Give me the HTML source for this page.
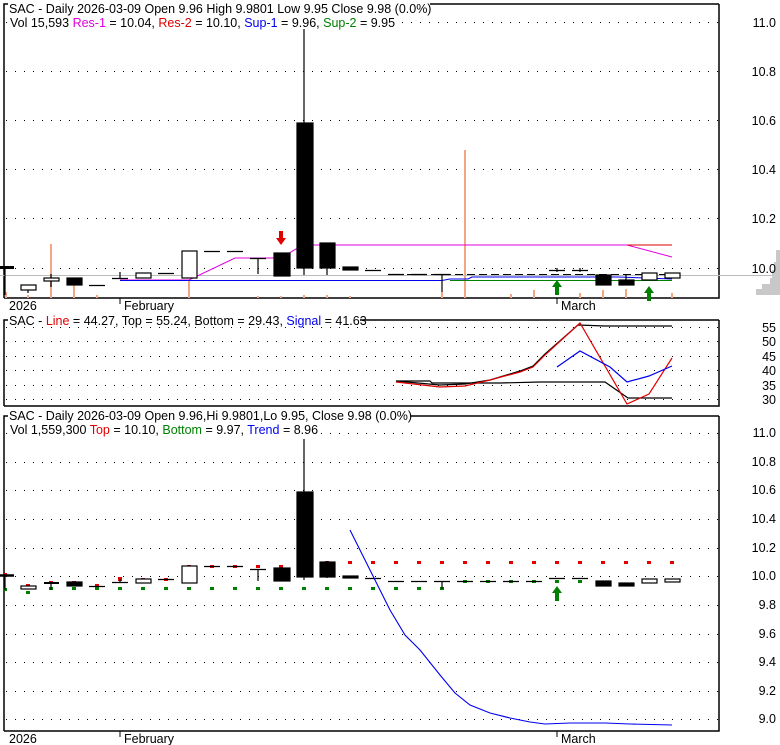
<!DOCTYPE html>
<html><head><style>
html,body{margin:0;padding:0;background:#fff;}
svg{display:block;font-family:"Liberation Sans",sans-serif;font-size:12.5px;}
</style></head><body>
<svg width="780" height="745" viewBox="0 0 780 745" xmlns="http://www.w3.org/2000/svg">
<g stroke="#000" stroke-width="1" stroke-dasharray="1 8" fill="none">
<path d="M6 22.5H719M6 71.5H719M6 120.5H719M6 169.5H719M6 218.5H719M6 268.5H719"/>
<path d="M6 327.5H719M6 341.5H719M6 356.5H719M6 370.5H719M6 385.5H719M6 399.5H719"/>
<path d="M6 433.5H719M6 462.5H719M6 490.5H719M6 519.5H719M6 548.5H719M6 576.5H719M6 605.5H719M6 634.5H719M6 662.5H719M6 691.5H719M6 719.5H719"/>
</g>
<!-- frames -->
<g stroke="#000" fill="none" stroke-width="1.5">
<path d="M4 298V4H8M719 4V298H4"/>
<path d="M430 4H719"/>
<path d="M4 406V320H8M719 320V406H4M360 320H719"/>
<path d="M4 731V416H8M719 416V731H4M410 416H719"/>
</g>
<!-- panel1 volume bars -->
<g stroke="#f4a582" stroke-width="2">
<path d="M6 298V292M28 298V295M51 298V244M74 298V285M97 298V295M189 298V281M258 298V296M281 298V296M304 298V295M327 298V295M350 298V296M442 298V292M465 298V150M511 298V294M534 298V290M580 298V293M603 298V290M626 298V289M649 298V293M672 298V293"/>
</g>
<!-- panel1 lines -->
<path d="M0 275.5H780" stroke="#bbb" stroke-width="1"/>
<path d="M776 250h4v45h-24v-6h6v-5h8v-6h2v-8h2v-8h2z" fill="#c8c8c8"/>
<path d="M395 274.5H672" stroke="#000" stroke-dasharray="8 4"/>
<path d="M120 280 L189 280 L235 258 L281 258 L296 249 L304 245 L627 245 L672 257" stroke="#e000e0" fill="none"/>
<path d="M627 245H672" stroke="#e00000"/>
<path d="M120 280.5H442 M442 280.5 L450 279 H468 L472 277 H603 L618 277 L672 279" stroke="#0000ee" fill="none"/>
<path d="M450 280.5H672" stroke="#008000"/>
<!-- panel1 candles -->
<g stroke="#000" stroke-width="1.2" fill="#fff">
<path d="M0 267.5H14" stroke-width="3"/><path d="M5 267V295"/>
<rect x="21" y="285" width="15" height="5"/><path d="M28 290V293"/>
<path d="M51 274V287"/><rect x="44" y="278" width="15" height="3"/>
<rect x="67" y="278" width="15" height="7" fill="#000"/>
<path d="M89 285.5H105M112 278.5H128M120 272V278M158 273.5H174M204 251.5H220M227 251.5H243M250 258.5H266M258 258V274M365 270.5H381M388 274.5H404M411 274.5H427M434 274.5H450M442 274V292M549 270.5H565M557 268V272M572 270.5H588M580 268V272"/>
<rect x="136" y="273" width="15" height="5"/>
<rect x="182" y="251" width="15" height="27"/>
<rect x="274" y="253" width="16" height="23" fill="#000"/>
<path d="M304 28V275M327 243V275"/>
<rect x="297" y="123" width="16" height="145" fill="#000"/>
<rect x="320" y="243" width="15" height="25" fill="#000"/>
<rect x="343" y="267" width="15" height="3" fill="#000"/>
<rect x="596" y="275" width="15" height="10" fill="#000"/>
<rect x="619" y="280" width="15" height="5" fill="#000"/><path d="M626 274V280"/>
<rect x="642" y="273" width="15" height="7"/>
<rect x="665" y="273" width="15" height="5"/>
</g>
<path d="M279 231h4v7h3l-5 7l-5-7h3z" fill="#e00000"/>
<path d="M555 295v-8h-3l5-7l5 7h-3v8z" fill="#008000"/>
<path d="M647 301v-8h-3l5-7l5 7h-3v8z" fill="#008000"/>
<!-- panel1 text -->
<rect x="8" y="16" width="380" height="13" fill="#fff"/>
<text x="9" y="13" fill="#000">SAC - Daily 2026-03-09 Open 9.96  High 9.9801  Low 9.95  Close 9.98 (0.0%)</text>
<text x="10" y="27"><tspan fill="#000">Vol 15,593 </tspan><tspan fill="#e000e0">Res-1</tspan><tspan fill="#000"> = 10.04, </tspan><tspan fill="#e00000">Res-2</tspan><tspan fill="#000"> = 10.10, </tspan><tspan fill="#0000ee">Sup-1</tspan><tspan fill="#000"> = 9.96, </tspan><tspan fill="#008000">Sup-2</tspan><tspan fill="#000"> = 9.95</tspan></text>
<g fill="#000" text-anchor="end">
<text x="776" y="27">11.0</text><text x="776" y="76">10.8</text><text x="776" y="125">10.6</text><text x="776" y="174">10.4</text><text x="776" y="223">10.2</text><text x="776" y="273">10.0</text>
</g>
<path d="M120 298v6M557 298v6M120 731v6M557 731v6" stroke="#000"/>
<text x="9" y="310">2026</text><text x="124" y="310">February</text><text x="561" y="310">March</text>
<!-- panel2 -->
<text x="9" y="325"><tspan>SAC - </tspan><tspan fill="#e00000">Line</tspan><tspan> = 44.27, Top = 55.24, Bottom = 29.43, </tspan><tspan fill="#0000ee">Signal</tspan><tspan> = 41.63</tspan></text>
<g fill="none" stroke-width="1.2">
<path d="M396 381 L430 381 L432 383 L500 383 L540 382 L605 382 L628 398 L672 398" stroke="#000"/>
<path d="M396 381 L440 385 L465 384 L490 380 L520 371 L533 366 L545 354 L578 325 L605 326 L672 326" stroke="#000"/>
<path d="M396 382 L440 387 L465 386 L490 380 L520 372 L533 367 L545 355 L580 323 L627 404 L649 394 L672 358" stroke="#e00000"/>
<path d="M557 367 L580 351 L610 367 L627 382 L649 376 L672 366" stroke="#0000ee"/>
</g>
<g fill="#000" text-anchor="end">
<text x="776" y="332">55</text><text x="776" y="346">50</text><text x="776" y="361">45</text><text x="776" y="375">40</text><text x="776" y="390">35</text><text x="776" y="404">30</text>
</g>
<!-- panel3 -->
<rect x="8" y="423" width="305" height="13" fill="#fff"/>
<text x="9" y="420">SAC - Daily 2026-03-09 Open 9.96,Hi 9.9801,Lo 9.95, Close 9.98 (0.0%)</text>
<text x="10" y="434"><tspan>Vol 1,559,300 </tspan><tspan fill="#e00000">Top</tspan><tspan> = 10.10, </tspan><tspan fill="#008000">Bottom</tspan><tspan> = 9.97, </tspan><tspan fill="#0000ee">Trend</tspan><tspan> = 8.96</tspan></text>
<g fill="#e00000">
<rect x="3" y="573" width="4" height="3"/><rect x="26" y="584" width="4" height="3"/><rect x="49" y="581" width="4" height="3"/><rect x="72" y="581" width="4" height="3"/><rect x="95" y="584" width="4" height="3"/><rect x="118" y="577" width="4" height="4"/><rect x="141" y="578" width="4" height="3"/><rect x="164" y="578" width="4" height="3"/><rect x="187" y="565" width="4" height="3"/><rect x="210" y="565" width="4" height="3"/><rect x="233" y="565" width="4" height="3"/><rect x="256" y="565" width="4" height="3"/><rect x="279" y="565" width="4" height="3"/><rect x="325" y="561" width="4" height="3"/>
<rect x="348" y="561" width="4" height="3"/><rect x="371" y="561" width="4" height="3"/><rect x="394" y="561" width="4" height="3"/><rect x="417" y="561" width="4" height="3"/><rect x="440" y="561" width="4" height="3"/><rect x="463" y="561" width="4" height="3"/><rect x="486" y="561" width="4" height="3"/><rect x="509" y="561" width="4" height="3"/><rect x="532" y="561" width="4" height="3"/><rect x="555" y="561" width="4" height="3"/><rect x="578" y="561" width="4" height="3"/><rect x="601" y="561" width="4" height="3"/><rect x="624" y="561" width="4" height="3"/><rect x="647" y="561" width="4" height="3"/><rect x="670" y="561" width="4" height="3"/>
</g>
<g fill="#008000">
<rect x="3" y="588" width="4" height="3"/><rect x="26" y="591" width="4" height="3"/><rect x="49" y="587" width="4" height="3"/><rect x="72" y="587" width="4" height="3"/><rect x="95" y="587" width="4" height="3"/><rect x="118" y="587" width="4" height="3"/><rect x="141" y="587" width="4" height="3"/><rect x="164" y="587" width="4" height="3"/><rect x="187" y="587" width="4" height="3"/><rect x="210" y="587" width="4" height="3"/><rect x="233" y="587" width="4" height="3"/><rect x="256" y="587" width="4" height="3"/><rect x="279" y="587" width="4" height="3"/><rect x="302" y="587" width="4" height="3"/><rect x="325" y="587" width="4" height="3"/><rect x="348" y="587" width="4" height="3"/><rect x="371" y="587" width="4" height="3"/><rect x="394" y="587" width="4" height="3"/><rect x="417" y="587" width="4" height="3"/><rect x="440" y="587" width="4" height="3"/><rect x="463" y="580" width="4" height="3"/><rect x="486" y="580" width="4" height="3"/><rect x="509" y="580" width="4" height="3"/><rect x="532" y="580" width="4" height="3"/><rect x="555" y="580" width="4" height="3"/><rect x="578" y="580" width="4" height="3"/>
</g>
<g stroke="#000" stroke-width="1.2" fill="#fff">
<path d="M0 575.5H14" stroke-width="2.5"/><path d="M5 575V590"/>
<rect x="21" y="586" width="15" height="3"/>
<path d="M51 583V590"/><path d="M44 583H59" stroke-width="2"/>
<rect x="67" y="582" width="15" height="4" fill="#000"/>
<path d="M89 586.5H105M112 582.5H128M120 579V582M158 579.5H174M204 566.5H220M227 566.5H243M250 569.5H266M258 569V581M365 578.5H381M388 581.5H404M411 581.5H427M434 581.5H450M442 581V589M457 581.5H473M480 581.5H496M503 581.5H519M526 581.5H542M549 578.5H565M572 578.5H588"/>
<rect x="136" y="579" width="15" height="4"/>
<rect x="182" y="566" width="15" height="17"/>
<rect x="274" y="568" width="16" height="13" fill="#000"/>
<path d="M304 439V580M327 561V578"/>
<rect x="297" y="492" width="16" height="85" fill="#000"/>
<rect x="320" y="562" width="15" height="15" fill="#000"/>
<rect x="343" y="576" width="15" height="2" fill="#000"/>
<rect x="596" y="581" width="15" height="5" fill="#000"/>
<rect x="619" y="583" width="15" height="3" fill="#000"/>
<rect x="642" y="579" width="15" height="4"/>
<rect x="665" y="579" width="15" height="3"/>
</g>
<path d="M555 601v-8h-3l5-7l5 7h-3v8z" fill="#008000"/>
<path d="M350 530 L370 570 L390 610 L405 635 L420 650 L440 675 L455 693 L470 705 L490 713 L510 718 L530 722 L545 724 L570 723 L605 723 L630 724 L672 725" stroke="#0000ee" fill="none" stroke-width="1.1"/>
<g fill="#000" text-anchor="end">
<text x="776" y="437">11.0</text><text x="776" y="466">10.8</text><text x="776" y="494">10.6</text><text x="776" y="523">10.4</text><text x="776" y="552">10.2</text><text x="776" y="580">10.0</text><text x="776" y="609">9.8</text><text x="776" y="638">9.6</text><text x="776" y="666">9.4</text><text x="776" y="695">9.2</text><text x="776" y="723">9.0</text>
</g>
<text x="9" y="743">2026</text><text x="124" y="743">February</text><text x="561" y="743">March</text>
</svg>
</body></html>
